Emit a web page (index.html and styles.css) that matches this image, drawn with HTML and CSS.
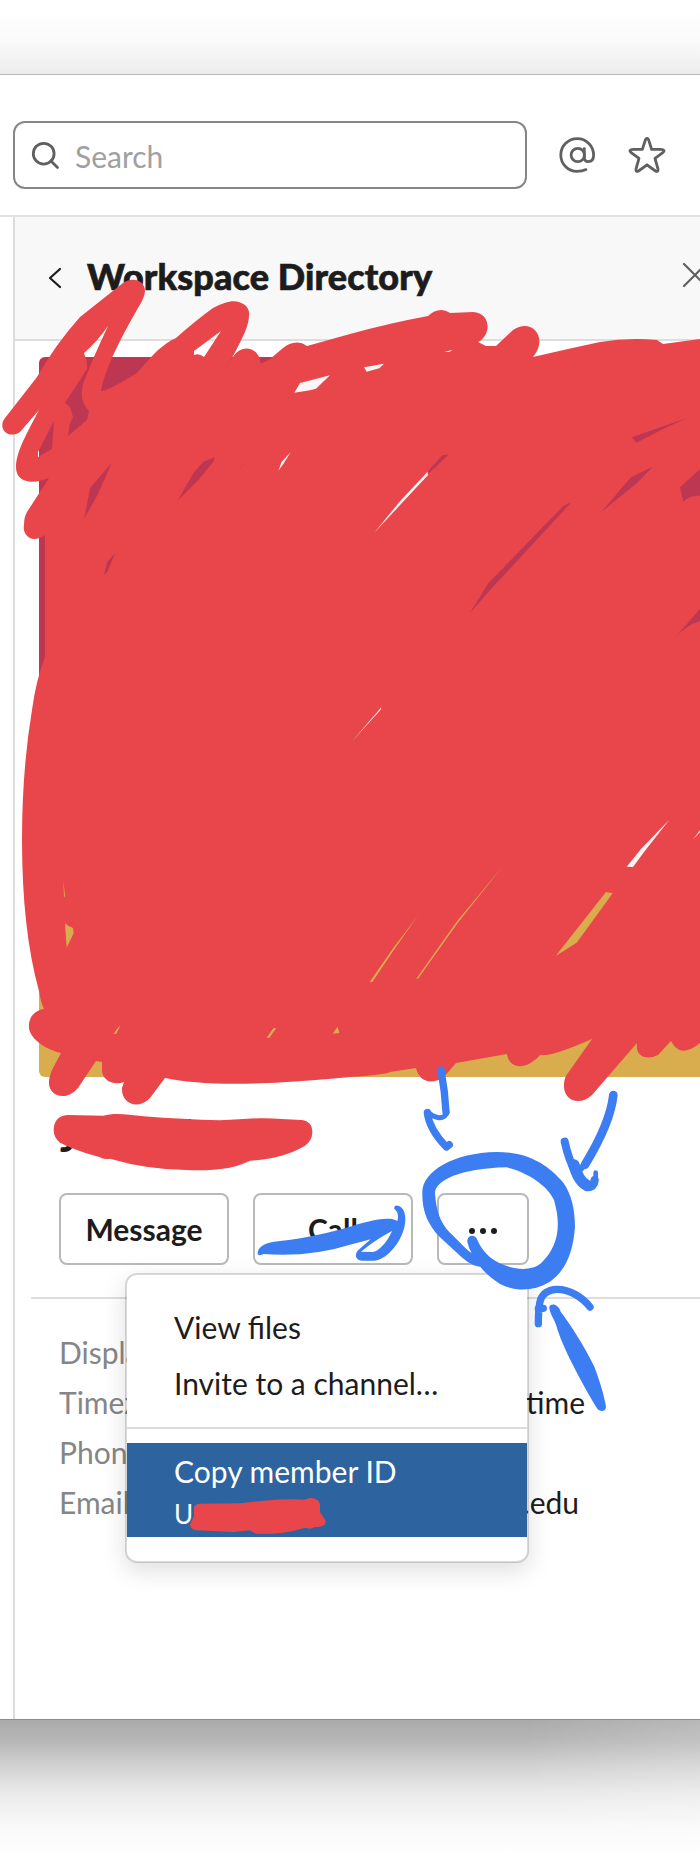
FILE: index.html
```html
<!DOCTYPE html>
<html lang="en">
<head>
<meta charset="utf-8">
<title>Workspace Directory</title>
<link rel="stylesheet" href="styles.css">
</head>
<body>
<div class="shade-top"></div>
<main class="window">
  <header class="topbar">
    <div class="search">
      <svg class="search-icon" width="30" height="30" viewBox="0 0 30 30"><circle cx="12.7" cy="12.7" r="10.4"/><path d="M20 20l6.5 6.5"/></svg>
      <span>Search</span>
    </div>
    <svg class="icon at" width="40" height="40" viewBox="0 0 40 40"><circle cx="20.8" cy="20" r="6.7"/><path d="M27.300 13.600V22C27.300 25 28.800 26.600 31.300 26.600 34.800 26.600 36.600 24.500 36.600 20A16.400 16.400 0 1 0 20 36.400C23.400 36.400 26.400 35.800 29 34.600"/></svg>
    <svg class="icon star" width="40" height="40" viewBox="0 0 40 40"><path d="M20 3.500Q21.300 3.500 22 6L24.600 14.300 33.500 14.400C37.500 14.600 38 15.800 35.500 17.800L28 23.300 31 34Q31.500 37.500 28.500 36L20 29.800 11.500 36Q8.500 37.500 9 34L12 23.300 4.500 17.800C2 15.800 2.500 14.600 6.500 14.400L15.400 14.300 18 6Q18.700 3.500 20 3.500Z"/></svg>
  </header>
  <section class="panel">
    <div class="panel-head">
      <svg class="back" width="14" height="22" viewBox="0 0 14 22"><path d="M12 2L2 11l10 9"/></svg>
      <h1>Workspace Directory</h1>
      <svg class="close" width="26" height="26" viewBox="0 0 26 26"><path d="M2 2l22 22M24 2L2 24"/></svg>
    </div>
    <div class="photo"></div>
    <div class="name">J</div>
    <div class="actions">
      <div class="btn message">Message</div>
      <div class="btn call">Call</div>
      <div class="btn more"><i></i><i></i><i></i></div>
      <div class="menu">
        <div class="item">View files</div>
        <div class="item">Invite to a channel…</div>
        <div class="rule"></div>
        <div class="item-active"><div class="copy">Copy member ID</div><div class="uid">U</div></div>
      </div>
    </div>
    <div class="details">
      <div class="row"><span class="label">Display name</span></div>
      <div class="row"><span class="label">Timezone</span><span class="value time">time</span></div>
      <div class="row"><span class="label">Phone number</span></div>
      <div class="row"><span class="label">Email</span><span class="value">.edu</span></div>
    </div>
  </section>
</main>
<div class="shade-bottom"></div>

<svg class="markup" width="700" height="1867" viewBox="0 0 700 1867">
  <!-- scribble over the photo -->
  <path class="red" fill-rule="evenodd" d="M123 283C133 276 145 281 145 291Q145 297 138 308Q105 365 101 391Q106 392 137 373L150 358Q157 350 167 343Q171 340 176 338Q195 321 213 308C228 300 237 299 245 305Q250 310 249 315Q249 322 245 332Q235 354 227 366L233 357C240 346 252 346 258 355Q261 359 260 363Q264 363 270 359L283 348C290 342 299 340 307 346L350 334Q390 323 428 316C435 309 443 308 450 313L473 312C492 313 491 336 478 342L486 346H496L513 330C532 317 549 338 533 357Q567 349 600 342Q629 337 657 340L663 344L700 339V1043C690 1051 679 1056 671 1041L658 1055C646 1061 635 1056 637 1043L592 1095C579 1107 563 1100 564 1085Q564 1078 568 1073L592 1039Q560 1053 547 1055H540C526 1071 509 1069 507 1054L456 1063L443 1078C430 1085 419 1081 416 1068L390 1072Q384 1075 350 1077Q220 1090 165 1078L150 1098C137 1111 121 1103 122 1088L124 1082C113 1086 102 1080 102 1070V1062L96 1061L78 1088C65 1103 48 1095 49 1082Q49 1077 52 1070L61 1053C44 1049 30 1038 29 1028C28 1016 36 1010 44 1009Q41 1003 39 991Q22 930 22 840Q22 770 32 710Q36 680 45 657V535C31 545 22 534 24 525Q24 517 27 512L49 478C34 484 16 484 16 467C16 452 27 433 39 410L20 432C8 440-3 428 5 418L37 377Q55 345 80 317ZM84 353Q96 343 108 326Q92 360 83 384C80 398 83 405 89 411L87 420 68 436 70 423 73 417 70 407 65 403Q78 383 87 369V362ZM194 351L221 331 204 357Q199 353 194 355ZM54 421L52 449 38 457V452Z"/>
  <g transform="translate(0 260) scale(.33333)">
    <path class="crimson" d="M335 608L270 685 253 775 295 700ZM645 592L610 605 580 640 533 722 595 660 640 605ZM345 880L322 905 311 946 322 935ZM740 600L715 635 728 616Z"/>
    <path class="white" d="M872 577L845 605 835 632 850 612ZM990 346L900 369 883 398 930 391 948 386Z"/>
  </g>
  <g transform="translate(350 290) scale(.33333)">
    <path class="white" d="M42 232L102 221 88 235 50 245ZM283 186L308 179 298 186ZM233 545L150 634 72 729 234 555Z"/>
    <path class="crimson" d="M297 493L277 496 235 542V552ZM1012 384L845 442 859 458 950 412ZM908 530L843 562 755 665 862 578ZM664 637L640 648 415 880 359 970 425 895ZM1050 538L990 592 1000 635Q1015 616 1050 617ZM1050 957L975 1043Q1010 1005 1050 993Z"/>
  </g>
  <g transform="translate(350 640) scale(.33333)">
    <path class="white" d="M94 202L5 305 92 209ZM958 539L875 625 830 680 849 681 885 632ZM1050 571L1028 599 1050 576Z"/>
    <path class="gold" d="M457 680L320 845 199 1016 204 1016 323 849ZM205 825L130 924 59 1026 67 1026 133 928ZM768 756L788 760 680 908 617 948Z"/>
  </g>
  <path class="gold" transform="translate(0 640) scale(.33333)" d="M195 850Q205 860 219 864L221 880 200 923ZM190 720L195 768 192 772ZM362 1155L349 1169 341 1182 349 1181ZM829 1164L820 1165 800 1193 808 1194ZM1013 1160L998 1181 1018 1179Z"/>
  <!-- hidden name -->
  <path class="ink" d="M184 1119h7v3h-7z"/>
  <path class="red" transform="translate(0 1080) scale(.33333)" d="M161 150C161 120 180 105 205 105L310 107C340 98 380 102 430 109Q550 118 660 121C730 119 780 110 845 117L905 120C928 123 938 137 937 158Q936 182 915 197C870 224 810 239 750 242C695 270 630 271 575 271Q440 269 330 236Q310 239 298 231C240 215 205 200 180 188Q161 172 161 150Z"/>
  <path class="red" transform="translate(0 1341) scale(.33333)" d="M570 550L582 525V500Q585 489 600 488L720 487 790 479Q860 473 915 476C935 464 960 474 960 492V513Q969 526 977 540C978 556 960 558 945 558L930 563 915 560Q880 571 850 575 800 580 770 578 757 576 750 568L700 573 590 568Q571 566 570 550Z"/>
  <!-- pointers around the overflow button -->
  <g transform="translate(350 1050) scale(.33333)">
    <path class="blue" fill-rule="evenodd" d="M217 430C214 365 310 308 440 306C540 306 596 348 640 398C665 433 675 480 675 530C670 600 650 660 600 695C550 724 500 726 450 702Q410 676 391 650C362 648 347 634 270 562C233 524 216 482 217 430ZM255 430C255 392 330 355 470 352C535 367 595 410 612 450C635 530 624 590 573 640C540 668 470 660 420 622Q395 600 382 570C376 550 351 555 352 575Q356 596 365 609C338 590 325 570 300 548C271 520 258 480 255 430Z"/>
    <path class="blue" fill-rule="evenodd" d="M-277 612C-277 583-240 576-210 573C-120 562-65 548 0 530C60 511 90 506 122 506Q136 508 142 513C147 495 142 483 133 477C130 465 143 463 155 473Q166 482 166 510C165 565 112 632 70 632H35C15 630 13 610 26 599L62 568 0 584Q-120 622-260 612C-266 616-276 617-277 612ZM33 605Q75 570 126 543C111 578 85 605 68 606Z"/>
    <g class="stroke">
      <path stroke-width="22" d="M273 60Q285 125 288 186M232 188C236 225 262 263 289 291L298 284"/>
      <path stroke-width="15" d="M291 188C281 213 247 203 233 184"/>
      <path stroke-width="26" d="M790 135C782 210 738 290 705 344"/>
      <path stroke-width="18" d="M704 342L694 355"/>
      <path stroke-width="24" d="M644 275Q656 330 676 365"/>
      <path stroke-width="34" d="M672 345Q686 395 711 406"/>
      <path stroke-width="25" d="M711 411Q732 411 734 390"/>
      <path stroke-width="14" d="M737 389V368"/>
      <path stroke-width="22" d="M565 821C565 762 565 721 620 718C660 717 700 745 720 771M565 776L580 775"/>
    </g>
    <path class="blue" d="M598 770C603 759 625 762 632 785C680 849 718 918 733 950C752 1000 763 1040 768 1070C768 1086 749 1087 741 1075C690 990 635 885 620 830C614 808 597 788 598 770Z"/>
  </g>
</svg>
</body>
</html>
```
FILE: styles.css
```css
* { box-sizing: border-box; }
body {
  margin: 0;
  position: relative;
  width: 700px;
  height: 1867px;
  overflow: hidden;
  background: #fff;
  color: #1d1c1d;
  font-family: Lato, sans-serif;
  font-size: 30px;
}
svg { display: block; flex: none; }
.shade-top { height: 74px; background: linear-gradient(#fff 10%, #fafafa 55%, #ececec); }
.shade-bottom {
  height: 147px;
  background:
    linear-gradient(90deg, transparent 75%, rgba(255, 255, 255, .16)),
    linear-gradient(#aaa, #b8b8b8 15%, #d3d3d3 32%, #eaeaea 50%, #f8f8f8 70%, #fff 92%);
}
.window { height: 1646px; border-top: 1px solid #b8b8b8; border-bottom: 1px solid #8c8c8c; background: #fff; }
.topbar { display: flex; height: 142px; padding: 46px 0 0 13px; border-bottom: 2px solid #e2e2e2; }
.search {
  display: flex;
  align-items: center;
  width: 514px;
  height: 68px;
  padding-left: 16px;
  border: 2px solid #868686;
  border-radius: 12px;
  color: #a0a0a0;
}
.search span { margin: 1px 0 0 14px; }
.search-icon { margin-top: 2px; }
.search-icon, .icon { fill: none; stroke: #616061; stroke-width: 2.8; stroke-linecap: round; stroke-linejoin: round; }
.at { margin: 14px 0 0 30px; }
.star { margin: 14px 0 0 30px; }
.panel { height: 1502px; margin-left: 13px; border-left: 2px solid #ddd; overflow: hidden; }
.panel-head {
  display: flex;
  align-items: center;
  height: 124px;
  padding-left: 33px;
  border-bottom: 2px solid #ddd;
  background: #f8f8f8;
}
.panel-head h1 {
  flex: none;
  width: 590px;
  margin: -5px 0 0 25px;
  font-size: 36px;
  font-weight: 900;
  line-height: 44px;
  letter-spacing: .12px;
  -webkit-text-stroke: .7px #1d1c1d;
}
.back, .close { fill: none; stroke-width: 2.2; stroke-linecap: round; stroke-linejoin: round; }
.back { stroke: #1d1c1d; }
.close { margin: -6px 0 0 5px; stroke: #616061; }
.photo { height: 720px; margin: 16px 0 0 24px; border-radius: 6px 0 0 6px; background: linear-gradient(#bd3652 50%, #d9ad4e 50%); }
.name { height: 44px; margin: 39px 0 0 45px; font-size: 36px; font-weight: 900; line-height: 44px; }
.actions { position: relative; display: flex; gap: 24px; margin: 33px 0 0 44px; }
.btn {
  display: flex;
  align-items: center;
  justify-content: center;
  height: 72px;
  border: 2px solid #b9b9b9;
  border-radius: 8px;
  font-weight: 700;
}
.message { width: 170px; }
.call { width: 160px; }
.more { width: 92px; gap: 5px; padding-top: 4px; }
.more i { width: 6px; height: 6px; border-radius: 50%; background: #1d1c1d; }
.menu {
  position: absolute;
  top: 80px;
  left: 66px;
  width: 404px;
  height: 290px;
  padding-top: 24px;
  border: 2px solid rgba(29, 28, 29, .17);
  border-radius: 12px;
  background: #fff;
  background-clip: padding-box;
  box-shadow: 0 8px 24px rgba(0, 0, 0, .13);
}
.item { padding-left: 47px; line-height: 56px; }
.rule { height: 2px; margin: 16px 0 14px; background: #ddd; }
.item-active { height: 94px; padding: 8px 0 0 47px; background: #2d639e; color: #fff; }
.copy { line-height: 40px; }
.uid { padding-top: 1px; font-size: 26px; line-height: 45px; }
.details { margin: 32px 0 0 16px; padding: 28px 0 0 28px; border-top: 2px solid #ddd; }
.row { display: flex; width: 520px; height: 50px; line-height: 50px; }
.label { width: 200px; color: #868686; }
.value { flex: 1; text-align: right; }
.time { margin-right: -6px; }
.markup { position: absolute; top: 0; left: 0; }
.red { fill: #e8464b; }
.blue { fill: #3d7df2; }
.crimson { fill: #bd3652; }
.gold { fill: #d9ad4e; }
.white { fill: #fbf5f5; }
.ink { fill: #1d1c1d; }
.stroke { fill: none; stroke: #3d7df2; stroke-linecap: round; stroke-linejoin: round; }
```
